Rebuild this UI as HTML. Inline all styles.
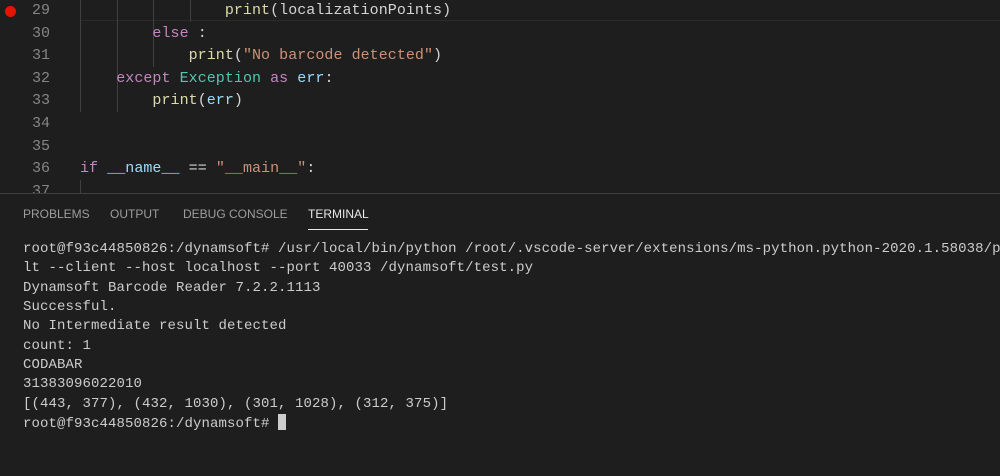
<!DOCTYPE html>
<html><head><style>
body{margin:0;width:1000px;height:476px;background:#1e1e1e;overflow:hidden;position:relative;font-family:"Liberation Mono",monospace}
.ed{position:absolute;left:0;top:0;width:1000px;height:193px;overflow:hidden}
.ln{position:absolute;left:0;width:50px;text-align:right;color:#858585;font-size:15px;line-height:22.6px}
.code{position:absolute;left:80px;font-size:15px;line-height:22.6px;white-space:pre;color:#d4d4d4;letter-spacing:0.05px}
.k{color:#c586c0}.f{color:#dcdcaa}.s{color:#ce9178}.c{color:#4ec9b0}.v{color:#9cdcfe}
.g{position:absolute;width:1px;background:#404040}
.tabs{position:absolute;top:207px;left:23px;font-family:"Liberation Sans",sans-serif;font-size:12px;color:#9d9d9d}
.tabs span{position:absolute;white-space:nowrap}
.term{position:absolute;left:23px;top:240px;width:977px;overflow:hidden;font-size:14px;line-height:19.35px;white-space:pre;color:#cccccc;letter-spacing:0.1px}
</style></head><body>
<div class="ed">
<div style="position:absolute;left:5px;top:6px;width:11px;height:11px;border-radius:50%;background:#e51400"></div>
<div class="ln" style="top:0">29<br>30<br>31<br>32<br>33<br>34<br>35<br>36<br>37</div>
<div style="position:absolute;left:80px;top:20px;width:920px;height:1px;background:#2a2a2a"></div>
<div class="g" style="left:80px;top:0;height:112px"></div>
<div class="g" style="left:117px;top:0;height:112px"></div>
<div class="g" style="left:153px;top:0;height:67px"></div>
<div class="g" style="left:190px;top:0;height:22px"></div>
<div class="g" style="left:80px;top:180px;height:20px"></div>
<div class="code" style="top:0">                <span class="f">print</span>(localizationPoints)
        <span class="k">else</span> :
            <span class="f">print</span>(<span class="s">"No barcode detected"</span>)
    <span class="k">except</span> <span class="c">Exception</span> <span class="k">as</span> <span class="v">err</span>:
        <span class="f">print</span>(<span class="v">err</span>)


<span class="k">if</span> <span class="v">__name__</span> == <span class="s">"__main__"</span>:
</div>
</div>
<div style="position:absolute;left:0;top:193px;width:1000px;height:1px;background:#414141"></div>
<div class="tabs">
<span style="left:0">PROBLEMS</span>
<span style="left:87px">OUTPUT</span>
<span style="left:160px">DEBUG CONSOLE</span>
<span style="left:285px;color:#e7e7e7">TERMINAL</span>
</div>
<div style="position:absolute;left:308px;top:229px;width:60px;height:1px;background:#e7e7e7"></div>
<div class="term">root@f93c44850826:/dynamsoft# /usr/local/bin/python /root/.vscode-server/extensions/ms-python.python-2020.1.58038/p
lt --client --host localhost --port 40033 /dynamsoft/test.py
Dynamsoft Barcode Reader 7.2.2.1113
Successful.
No Intermediate result detected
count: 1
CODABAR
31383096022010
[(443, 377), (432, 1030), (301, 1028), (312, 375)]
root@f93c44850826:/dynamsoft# <span style="display:inline-block;width:8px;height:16px;background:#cccccc;vertical-align:-3px"></span></div>
</body></html>
